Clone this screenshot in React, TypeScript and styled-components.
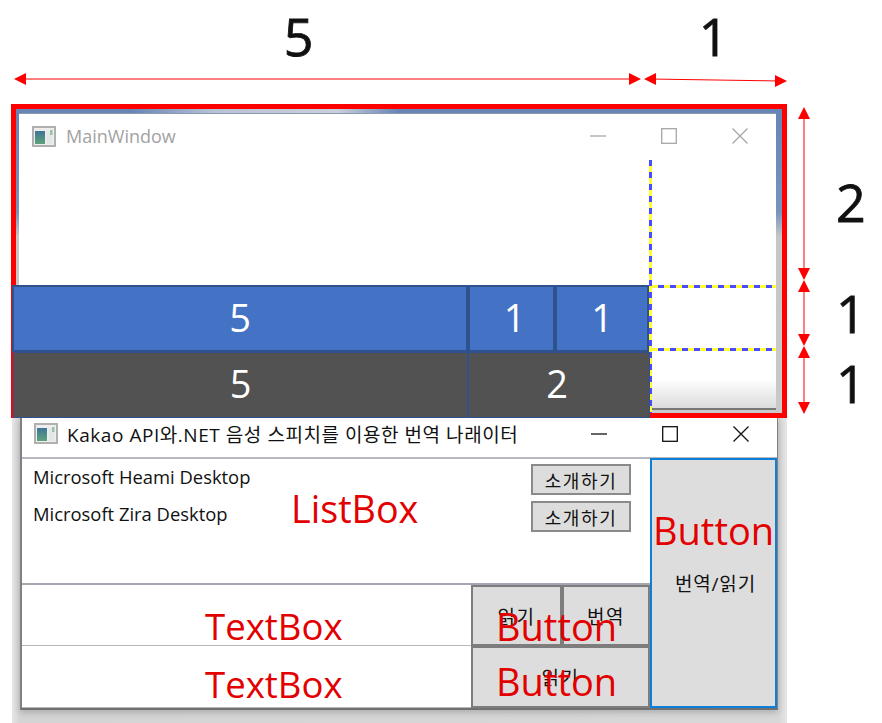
import styled, { createGlobalStyle } from "styled-components";

const KOREAN_UI = `"Open Sans", "Noto Sans CJK KR", sans-serif`;

const GlobalStyle = createGlobalStyle`
  html, body {
    margin: 0;
    padding: 0;
    background: #ffffff;
  }
  body {
    font-family: ${KOREAN_UI};
  }
`;

function WindowIcon() {
  return (
    <svg width="24" height="21" viewBox="0 0 24 21" aria-hidden="true">
      <defs>
        <linearGradient id="iconFill" x1="0" y1="0" x2="0" y2="1">
          <stop offset="0" stopColor="#3f7596" />
          <stop offset="1" stopColor="#5fa27a" />
        </linearGradient>
      </defs>
      <rect x="1" y="1" width="22" height="19" fill="#eeeeee" stroke="#b0b0b0" strokeWidth="2" />
      <rect x="3" y="5" width="10" height="13" fill="url(#iconFill)" />
      <rect x="14.5" y="5" width="6" height="13" fill="#e3e8e5" />
      <rect x="18" y="4" width="2.5" height="5" fill="#9cc0a8" />
    </svg>
  );
}

type ControlProps = { color: string };

function MinimizeIcon({ color }: ControlProps) {
  return (
    <svg width="16" height="16" viewBox="0 0 16 16" aria-hidden="true">
      <path d="M0 8h16" stroke={color} strokeWidth="1.3" fill="none" />
    </svg>
  );
}

function MaximizeIcon({ color }: ControlProps) {
  return (
    <svg width="16" height="16" viewBox="0 0 16 16" aria-hidden="true">
      <rect x="0.7" y="0.7" width="14.6" height="14.6" stroke={color} strokeWidth="1.3" fill="none" />
    </svg>
  );
}

function CloseIcon({ color }: ControlProps) {
  return (
    <svg width="16" height="16" viewBox="0 0 16 16" aria-hidden="true">
      <path d="M0.5 0.5l15 15M15.5 0.5l-15 15" stroke={color} strokeWidth="1.3" fill="none" />
    </svg>
  );
}

function WindowControls({ color }: ControlProps) {
  return (
    <Controls>
      <MinimizeIcon color={color} />
      <MaximizeIcon color={color} />
      <CloseIcon color={color} />
    </Controls>
  );
}

function HorizontalArrow({ width, drop = 0 }: { width: number; drop?: number }) {
  return (
    <svg width={width} height="14" viewBox={`0 0 ${width} 14`} aria-hidden="true">
      <path d={`M6 5L${width - 6} ${5 + drop}`} stroke="#ff0000" strokeWidth="1" fill="none" />
      <path d="M0 5L12 -1V11Z" fill="#ff0000" />
      <path d={`M${width} ${5 + drop}L${width - 12} ${-1 + drop}V${11 + drop}Z`} fill="#ff0000" />
    </svg>
  );
}

function VerticalArrow({ height }: { height: number }) {
  return (
    <svg width="14" height={height} viewBox={`0 0 14 ${height}`} aria-hidden="true">
      <path d={`M7 6V${height - 6}`} stroke="#ff0000" strokeWidth="1" fill="none" />
      <path d="M7 0L13 12H1Z" fill="#ff0000" />
      <path d={`M7 ${height}L13 ${height - 12}H1Z`} fill="#ff0000" />
    </svg>
  );
}

export default function App() {
  return (
    <Page>
      <GlobalStyle />
      <TopScale>
        <ScaleColumn $width={627} $shift={58}>
          <ScaleDigit>5</ScaleDigit>
          <HorizontalArrow width={627} />
        </ScaleColumn>
        <ScaleColumn $width={143} $shift={4}>
          <ScaleDigit>1</ScaleDigit>
          <HorizontalArrow width={143} drop={2} />
        </ScaleColumn>
      </TopScale>

      <FrameRow>
        <RedFrame>
          <OldWindow>
            <OldClient>
              <TitleBar>
                <WindowIcon />
                <OldTitle>MainWindow</OldTitle>
                <WindowControls color="#a6a6a6" />
              </TitleBar>
            </OldClient>
          </OldWindow>

          <GridLineV />
          <GridLineH $top={176} />
          <GridLineH $top={239} />

          <RatioTable>
            <BlueRow>
              <BlueCell>5</BlueCell>
              <BlueCell $offset={6}>1</BlueCell>
              <BlueCell>1</BlueCell>
            </BlueRow>
            <DarkRow>
              <DarkCell>5</DarkCell>
              <DarkCell $offset={-4}>2</DarkCell>
            </DarkRow>
          </RatioTable>
        </RedFrame>

        <SideScale>
          <SideSegment $height={173} $digitOffset={17}>
            <VerticalArrow height={173} />
            <ScaleDigit>2</ScaleDigit>
          </SideSegment>
          <SideSegment $height={66} $digitOffset={0}>
            <VerticalArrow height={66} />
            <ScaleDigit>1</ScaleDigit>
          </SideSegment>
          <SideSegment $height={68} $digitOffset={6}>
            <VerticalArrow height={68} />
            <ScaleDigit>1</ScaleDigit>
          </SideSegment>
        </SideScale>
      </FrameRow>

      <ShadowBand>
        <AppWindow>
          <AppTitleBar>
            <WindowIcon />
            <AppTitle>Kakao API와.NET 음성 스피치를 이용한 번역 나래이터</AppTitle>
            <WindowControls color="#111111" />
          </AppTitleBar>

          <AppBody>
            <LeftPane>
              <VoiceList>
                <VoiceRow>
                  <VoiceName>Microsoft Heami Desktop</VoiceName>
                  <IntroButton>소개하기</IntroButton>
                </VoiceRow>
                <VoiceRow>
                  <VoiceName>Microsoft Zira Desktop</VoiceName>
                  <IntroButton>소개하기</IntroButton>
                </VoiceRow>
                <RedLabel $left={269} $top={28} $size={37.7}>ListBox</RedLabel>
              </VoiceList>

              <TopInputRow>
                <InputBox>
                  <RedLabel $left={183} $top={19} $size={36.6}>TextBox</RedLabel>
                </InputBox>
                <ActionButton $width={91}>읽기</ActionButton>
                <ActionButton $width={88}>번역</ActionButton>
                <RedLabel $left={474} $top={19} $size={38}>Button</RedLabel>
              </TopInputRow>

              <BottomInputRow>
                <InputBox>
                  <RedLabel $left={183} $top={16} $size={36.6}>TextBox</RedLabel>
                </InputBox>
                <ActionButton $width={179}>읽기</ActionButton>
                <RedLabel $left={474} $top={13} $size={38}>Button</RedLabel>
              </BottomInputRow>
            </LeftPane>

            <MainButton>
              번역/읽기
              <RedLabel $left={1} $top={48} $size={38}>Button</RedLabel>
            </MainButton>
          </AppBody>
        </AppWindow>
      </ShadowBand>
    </Page>
  );
}

const Page = styled.div`
  width: 882px;
  height: 723px;
  overflow: hidden;
  background: #ffffff;
`;

const TopScale = styled.div`
  display: flex;
  gap: 3px;
  height: 104px;
  padding-left: 14px;
  box-sizing: border-box;
`;

const ScaleColumn = styled.div<{ $width: number; $shift: number }>`
  width: ${(p) => p.$width}px;
  height: 88px;
  display: flex;
  flex-direction: column;
  align-items: center;
  justify-content: flex-end;

  & > span {
    margin-right: ${(p) => p.$shift}px;
    margin-bottom: 8px;
  }
  & > svg {
    overflow: visible;
    flex: none;
  }
`;

const ScaleDigit = styled.span`
  font-family: "Open Sans", sans-serif;
  font-size: 52px;
  line-height: 60px;
  color: #111111;
  -webkit-text-stroke: 0.8px #111111;
`;

const FrameRow = styled.div`
  display: flex;
  height: 314px;
  padding-left: 11px;
`;

const RedFrame = styled.div`
  position: relative;
  width: 776px;
  height: 314px;
  box-sizing: border-box;
  border: 5px solid #ff0000;
`;

const OldWindow = styled.div`
  height: 100%;
  box-sizing: border-box;
  padding: 4px 6px 3px 3px;
  background:
    linear-gradient(90deg, transparent 15%, #b9c3d6 26%, #c9cfdb 42%, transparent 50%) top / 100% 4px no-repeat,
    linear-gradient(180deg, #6684b5 0%, #7894bd 34%, #c6c6c6 42%, #c9c9c9 100%);
`;

const OldClient = styled.div`
  height: 100%;
  box-sizing: border-box;
  border-top: 1px solid #8a98b0;
  border-bottom: 2px solid #777777;
  background: linear-gradient(180deg, #ffffff 0%, #ffffff 90%, #dcdcdc 100%);
`;

const TitleBar = styled.div`
  display: flex;
  align-items: center;
  height: 44px;
  padding-left: 13px;
`;

const OldTitle = styled.span`
  flex: 1;
  margin-left: 10px;
  font-size: 18px;
  color: #a2a2a2;
`;

const Controls = styled.div`
  display: flex;
  align-items: center;
  gap: 55px;
  padding-right: 28px;
`;

const GridLineV = styled.div`
  position: absolute;
  left: 633px;
  top: 51px;
  bottom: 0;
  width: 2.5px;
  background: repeating-linear-gradient(180deg, #4a4aff 0 6px, #ffff33 6px 12px);
`;

const GridLineH = styled.div<{ $top: number }>`
  position: absolute;
  left: 636px;
  width: 124px;
  top: ${(p) => p.$top}px;
  height: 2.5px;
  background: repeating-linear-gradient(90deg, #ffff33 0 6px, #4a4aff 6px 12px);
`;

const RatioTable = styled.div`
  position: absolute;
  left: -4px;
  top: 176px;
  width: 637px;
  height: 133px;
  display: grid;
  grid-template-rows: 67px 66px;
`;

const BlueRow = styled.div`
  display: grid;
  grid-template-columns: 456px 87px 94px;
`;

const BlueCell = styled.div<{ $offset?: number }>`
  display: flex;
  align-items: center;
  justify-content: center;
  box-sizing: border-box;
  padding-bottom: 3px;
  padding-left: ${(p) => Math.max(p.$offset ?? 0, 0)}px;
  border: 2px solid #2f528f;
  background: #4472c4;
  color: #ffffff;
  font-family: "Open Sans", sans-serif;
  font-size: 38px;
`;

const DarkRow = styled.div`
  display: grid;
  grid-template-columns: 455px 182px;
  padding-left: 1px;
  margin-right: -1px;
`;

const DarkCell = styled.div<{ $offset?: number }>`
  display: flex;
  align-items: center;
  justify-content: center;
  box-sizing: border-box;
  padding-bottom: 4px;
  padding-right: ${(p) => Math.max(-(p.$offset ?? 0), 0)}px;
  border: 1px solid #2f528f;
  background: #525252;
  color: #ffffff;
  font-family: "Open Sans", sans-serif;
  font-size: 38px;
`;

const SideScale = styled.div`
  display: flex;
  flex-direction: column;
  margin-left: 10px;
  padding-top: 3px;
`;

const SideSegment = styled.div<{ $height: number; $digitOffset: number }>`
  display: flex;
  align-items: center;
  gap: 25px;
  height: ${(p) => p.$height}px;

  & > svg {
    flex: none;
  }
  & > span {
    margin-top: ${(p) => p.$digitOffset}px;
  }
`;

const ShadowBand = styled.div`
  width: 775px;
  height: 305px;
  margin-left: 12px;
  box-sizing: border-box;
  padding: 0 9px 13px 8px;
  background: linear-gradient(90deg, #e6e6e6 0%, #d4d4d4 1%, #d8d8d8 99%, #e6e6e6 100%);
`;

const AppWindow = styled.div`
  height: 100%;
  box-sizing: border-box;
  background: #ffffff;
  border-left: 2px solid #808080;
  border-right: 1px solid #808080;
  border-bottom: 2px solid #707070;
  box-shadow: 0 2px 7px rgba(0, 0, 0, 0.22);
`;

const AppTitleBar = styled.div`
  display: flex;
  align-items: center;
  height: 41px;
  box-sizing: border-box;
  padding: 3px 0 11px 12px;
  border-bottom: 2px solid #b8b8c0;
`;

const AppTitle = styled.span`
  flex: 1;
  margin-left: 9px;
  font-size: 19px;
  letter-spacing: 0.55px;
  color: #111111;
  white-space: nowrap;
`;

const AppBody = styled.div`
  display: flex;
  height: 249px;
`;

const LeftPane = styled.div`
  flex: 1;
  min-width: 0;
  display: flex;
  flex-direction: column;
`;

const VoiceList = styled.div`
  position: relative;
  height: 126px;
  box-sizing: border-box;
  padding: 5px 19px 0 11px;
  border-bottom: 2px solid #a3a8b0;
  display: flex;
  flex-direction: column;
  gap: 6px;
`;

const VoiceRow = styled.div`
  display: flex;
  align-items: center;
  justify-content: space-between;
  height: 31px;
`;

const VoiceName = styled.span`
  padding-bottom: 6px;
  font-size: 18.4px;
  color: #111111;
`;

const IntroButton = styled.button`
  width: 100px;
  height: 31px;
  padding: 0;
  box-sizing: border-box;
  border: 2px solid #8a8a8a;
  background: #dddddd;
  font-family: ${KOREAN_UI};
  font-size: 18px;
  letter-spacing: 1.6px;
  color: #111111;
`;

const InputRow = styled.div`
  position: relative;
  display: flex;
`;

const TopInputRow = styled(InputRow)`
  height: 61px;
`;

const BottomInputRow = styled(InputRow)`
  flex: 1;
`;

const InputBox = styled.div`
  flex: 1;
  border-bottom: 1.5px solid #b4b8bd;
`;

const ActionButton = styled.button<{ $width: number }>`
  flex: none;
  width: ${(p) => p.$width}px;
  padding: 0;
  box-sizing: border-box;
  border: 2px solid #7d7d7d;
  background: #dddddd;
  font-family: ${KOREAN_UI};
  font-size: 19px;
  letter-spacing: 1.5px;
  color: #111111;
`;

const MainButton = styled.button`
  position: relative;
  flex: none;
  width: 127px;
  margin-top: -1px;
  padding: 0 0 0 4px;
  box-sizing: border-box;
  border: 2px solid #0f7ed6;
  background: #dddddd;
  font-family: ${KOREAN_UI};
  font-size: 19px;
  letter-spacing: 0.8px;
  color: #111111;
`;

const RedLabel = styled.span<{ $left: number; $top: number; $size: number }>`
  position: absolute;
  left: ${(p) => p.$left}px;
  top: ${(p) => p.$top}px;
  font-family: "Open Sans", sans-serif;
  font-size: ${(p) => p.$size}px;
  line-height: 44px;
  letter-spacing: 0;
  color: #e30000;
  white-space: nowrap;
  pointer-events: none;
`;
